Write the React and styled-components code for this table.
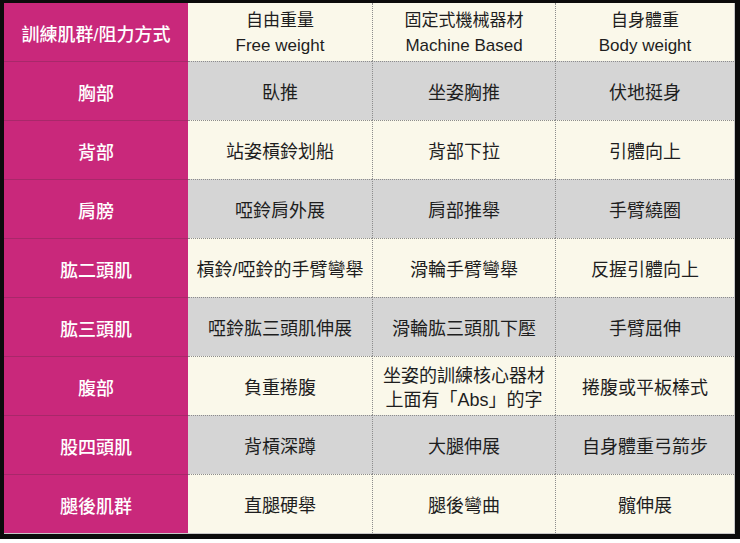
import React from "react";
import styled, { createGlobalStyle } from "styled-components";

const GlobalStyle = createGlobalStyle`
  html, body { margin: 0; padding: 0; background: #ffffff; }
  body { font-family: "Liberation Sans", "Noto Sans CJK TC", sans-serif; }
`;

// 표 전체 바깥 검은 테두리
const Frame = styled.div`
  width: 740px;
  box-sizing: border-box;
  border-style: solid;
  border-color: #0b0b0b;
  border-width: 3px 5px 5px 4px;
  background: #faf8ea;
`;

const Grid = styled.div`
  display: grid;
  grid-template-columns: 184px 184px 183px 179px;
  grid-template-rows: 58px repeat(8, 59px);
  border-right: 1px solid #c8c8c8;
  border-bottom: 1px solid #c8c8c8;
`;

const HeadCell = styled.div`
  display: flex;
  align-items: center;
  justify-content: center;
  padding-top: 2px;
  background: #c9287b;
  color: #fff;
  font-size: 18px;
  font-weight: 500;
  border-top: ${(p) => (p.first ? "none" : "1px solid #a8286a")};
  box-sizing: border-box;
`;

const Cell = styled.div`
  display: flex;
  flex-direction: column;
  align-items: center;
  justify-content: center;
  text-align: center;
  padding-top: ${(p) => (p.first ? "2px" : "3px")};
  background: ${(p) => (p.gray ? "#d5d5d5" : "#faf8ea")};
  color: #1e1e1e;
  font-size: ${(p) => (p.first ? "17px" : "18px")};
  line-height: ${(p) => (p.first ? "25px" : "24px")};
  box-sizing: border-box;
  border-top: ${(p) => (p.first ? "none" : "1px dotted #8c8c8c")};
  border-left: ${(p) => (p.edge ? "none" : "1px dotted #8c8c8c")};
`;

const headers = [
  ["自由重量", "Free weight"],
  ["固定式機械器材", "Machine Based"],
  ["自身體重", "Body weight"],
];

const rows = [
  ["胸部", "臥推", "坐姿胸推", "伏地挺身"],
  ["背部", "站姿槓鈴划船", "背部下拉", "引體向上"],
  ["肩膀", "啞鈴肩外展", "肩部推舉", "手臂繞圈"],
  ["肱二頭肌", "槓鈴/啞鈴的手臂彎舉", "滑輪手臂彎舉", "反握引體向上"],
  ["肱三頭肌", "啞鈴肱三頭肌伸展", "滑輪肱三頭肌下壓", "手臂屈伸"],
  ["腹部", "負重捲腹", ["坐姿的訓練核心器材", "上面有「Abs」的字"], "捲腹或平板棒式"],
  ["股四頭肌", "背槓深蹲", "大腿伸展", "自身體重弓箭步"],
  ["腿後肌群", "直腿硬舉", "腿後彎曲", "髖伸展"],
];

function Lines({ v }) {
  if (Array.isArray(v)) return v.map((t) => <span key={t}>{t}</span>);
  return <span>{v}</span>;
}

export default function App() {
  return (
    <>
      <GlobalStyle />
      <Frame>
        <Grid>
          <HeadCell first>訓練肌群/阻力方式</HeadCell>
          {headers.map((h, i) => (
            <Cell key={h[0]} first edge={i === 0}>
              <Lines v={h} />
            </Cell>
          ))}
          {rows.map((r, ri) => (
            <React.Fragment key={r[0]}>
              <HeadCell>{r[0]}</HeadCell>
              {r.slice(1).map((c, ci) => (
                <Cell key={ci} gray={ri % 2 === 0} edge={ci === 0}>
                  <Lines v={c} />
                </Cell>
              ))}
            </React.Fragment>
          ))}
        </Grid>
      </Frame>
    </>
  );
}
